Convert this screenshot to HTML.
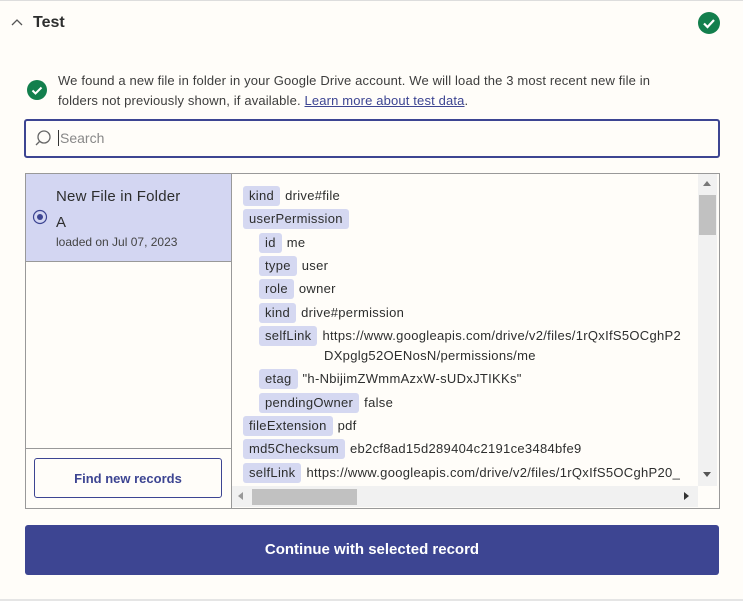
<!DOCTYPE html><html><head><style>
body{margin:0;width:743px;height:601px;background:#fffdf9;font-family:"Liberation Sans",sans-serif;color:#2d2e2e;position:relative;overflow:hidden}
.a{position:absolute}
.t{position:absolute;height:20px;line-height:20px;font-size:13px;white-space:nowrap;letter-spacing:0.3px}
.t b{font-weight:normal;background:#d5d8f1;padding:0 6px;border-radius:3px;margin-right:5px;display:inline-block}
</style></head><body>
<div class="a" style="left:0;top:0;width:743px;height:1px;background:#ddd"></div>
<svg class="a" style="left:10px;top:17px" width="14" height="10"><path d="M2 8L7 3L12 8" fill="none" stroke="#555" stroke-width="1.3"/></svg>
<div class="a" style="left:33px;top:14px;font-size:16px;font-weight:bold;color:#2d2e2e">Test</div>
<svg class="a" style="left:697px;top:11px" width="24" height="24"><circle cx="12" cy="12" r="11" fill="#137f4d"/><path d="M7 12.5l3.5 3.5 6.5-7" fill="none" stroke="#fff" stroke-width="2.2"/></svg>
<svg class="a" style="left:26px;top:79px" width="22" height="22"><circle cx="11" cy="11" r="10" fill="#137f4d"/><path d="M6.5 11.5l3 3 6-6" fill="none" stroke="#fff" stroke-width="2"/></svg>
<div class="a" style="left:58px;top:71px;width:634px;font-size:13px;line-height:20px;color:#3d3d3d;letter-spacing:0.15px">We found a new file in folder in your Google Drive account. We will load the 3 most recent new file in folders not previously shown, if available. <span style="text-decoration:underline;color:#3d4592">Learn more about test data</span>.</div>
<div class="a" style="left:24px;top:119px;width:692px;height:35px;border:2px solid #3d4592;border-radius:3px;background:#fffdf9"></div>
<svg class="a" style="left:34px;top:129px" width="18" height="18"><circle cx="10" cy="8" r="6" fill="none" stroke="#666" stroke-width="1.3"/><path d="M6 12L2 16" stroke="#666" stroke-width="1.3"/></svg>
<div class="a" style="left:58px;top:130px;font-size:14px;color:#888;border-left:1px solid #333;padding-left:1px">Search</div>
<div class="a" style="left:25px;top:173px;width:693px;height:334px;border:1px solid #999"></div>
<div class="a" style="left:26px;top:174px;width:205px;height:87px;background:#d3d6f2;border-bottom:1px solid #999"></div>
<div class="a" style="left:231px;top:174px;width:1px;height:334px;background:#999"></div>
<svg class="a" style="left:32px;top:209px" width="16" height="16"><circle cx="8" cy="8" r="6.5" fill="none" stroke="#3d4592" stroke-width="1.2"/><circle cx="8" cy="8" r="3" fill="#3d4592"/></svg>
<div class="a" style="left:56px;top:184px;font-size:15px;line-height:26px;letter-spacing:0.2px">New File in Folder<br>A</div>
<div class="a" style="left:56px;top:235px;font-size:12px;color:#444">loaded on Jul 07, 2023</div>
<div class="a" style="left:26px;top:448px;width:205px;height:1px;background:#999"></div>
<div class="a" style="left:34px;top:458px;width:186px;height:38px;border:1px solid #3d4592;border-radius:3px;text-align:center;line-height:40px;font-size:13px;font-weight:bold;color:#3d4592">Find new records</div>
<div class="t" style="left:243px;top:186px"><b>kind</b>drive#file</div>
<div class="t" style="left:243px;top:209px"><b>userPermission</b></div>
<div class="t" style="left:259px;top:233px"><b>id</b>me</div>
<div class="t" style="left:259px;top:256px"><b>type</b>user</div>
<div class="t" style="left:259px;top:279px"><b>role</b>owner</div>
<div class="t" style="left:259px;top:303px"><b>kind</b>drive#permission</div>
<div class="t" style="left:259px;top:326px"><b>selfLink</b>https://www.googleapis.com/drive/v2/files/1rQxIfS5OCghP2</div>
<div class="t" style="left:324px;top:346px">DXpglg52OENosN/permissions/me</div>
<div class="t" style="left:259px;top:369px"><b>etag</b>"h-NbijimZWmmAzxW-sUDxJTIKKs"</div>
<div class="t" style="left:259px;top:393px"><b>pendingOwner</b>false</div>
<div class="t" style="left:243px;top:416px"><b>fileExtension</b>pdf</div>
<div class="t" style="left:243px;top:439px"><b>md5Checksum</b>eb2cf8ad15d289404c2191ce3484bfe9</div>
<div class="t" style="left:243px;top:463px"><b>selfLink</b>https://www.googleapis.com/drive/v2/files/1rQxIfS5OCghP20_</div>
<div class="a" style="left:698px;top:174px;width:19px;height:312px;background:#f1f1f1"></div>
<div class="a" style="left:699px;top:195px;width:17px;height:40px;background:#c1c1c1"></div>
<div class="a" style="left:703px;top:181px;width:0;height:0;border:4px solid transparent;border-bottom:5px solid #777;border-top:0"></div>
<div class="a" style="left:703px;top:472px;width:0;height:0;border:4px solid transparent;border-top:5px solid #555;border-bottom:0"></div>
<div class="a" style="left:232px;top:486px;width:466px;height:21px;background:#f1f1f1"></div>
<div class="a" style="left:252px;top:489px;width:105px;height:16px;background:#c1c1c1"></div>
<div class="a" style="left:238px;top:492px;width:0;height:0;border:4px solid transparent;border-right:5px solid #999;border-left:0"></div>
<div class="a" style="left:684px;top:492px;width:0;height:0;border:4px solid transparent;border-left:5px solid #333;border-right:0"></div>
<div class="a" style="left:25px;top:525px;width:694px;height:50px;background:#3d4592;border-radius:3px;color:#fff;font-size:15px;font-weight:bold;text-align:center;line-height:50px">Continue with selected record</div>
<div class="a" style="left:0;top:599px;width:743px;height:2px;background:#e5e5e5"></div>
</body></html>
